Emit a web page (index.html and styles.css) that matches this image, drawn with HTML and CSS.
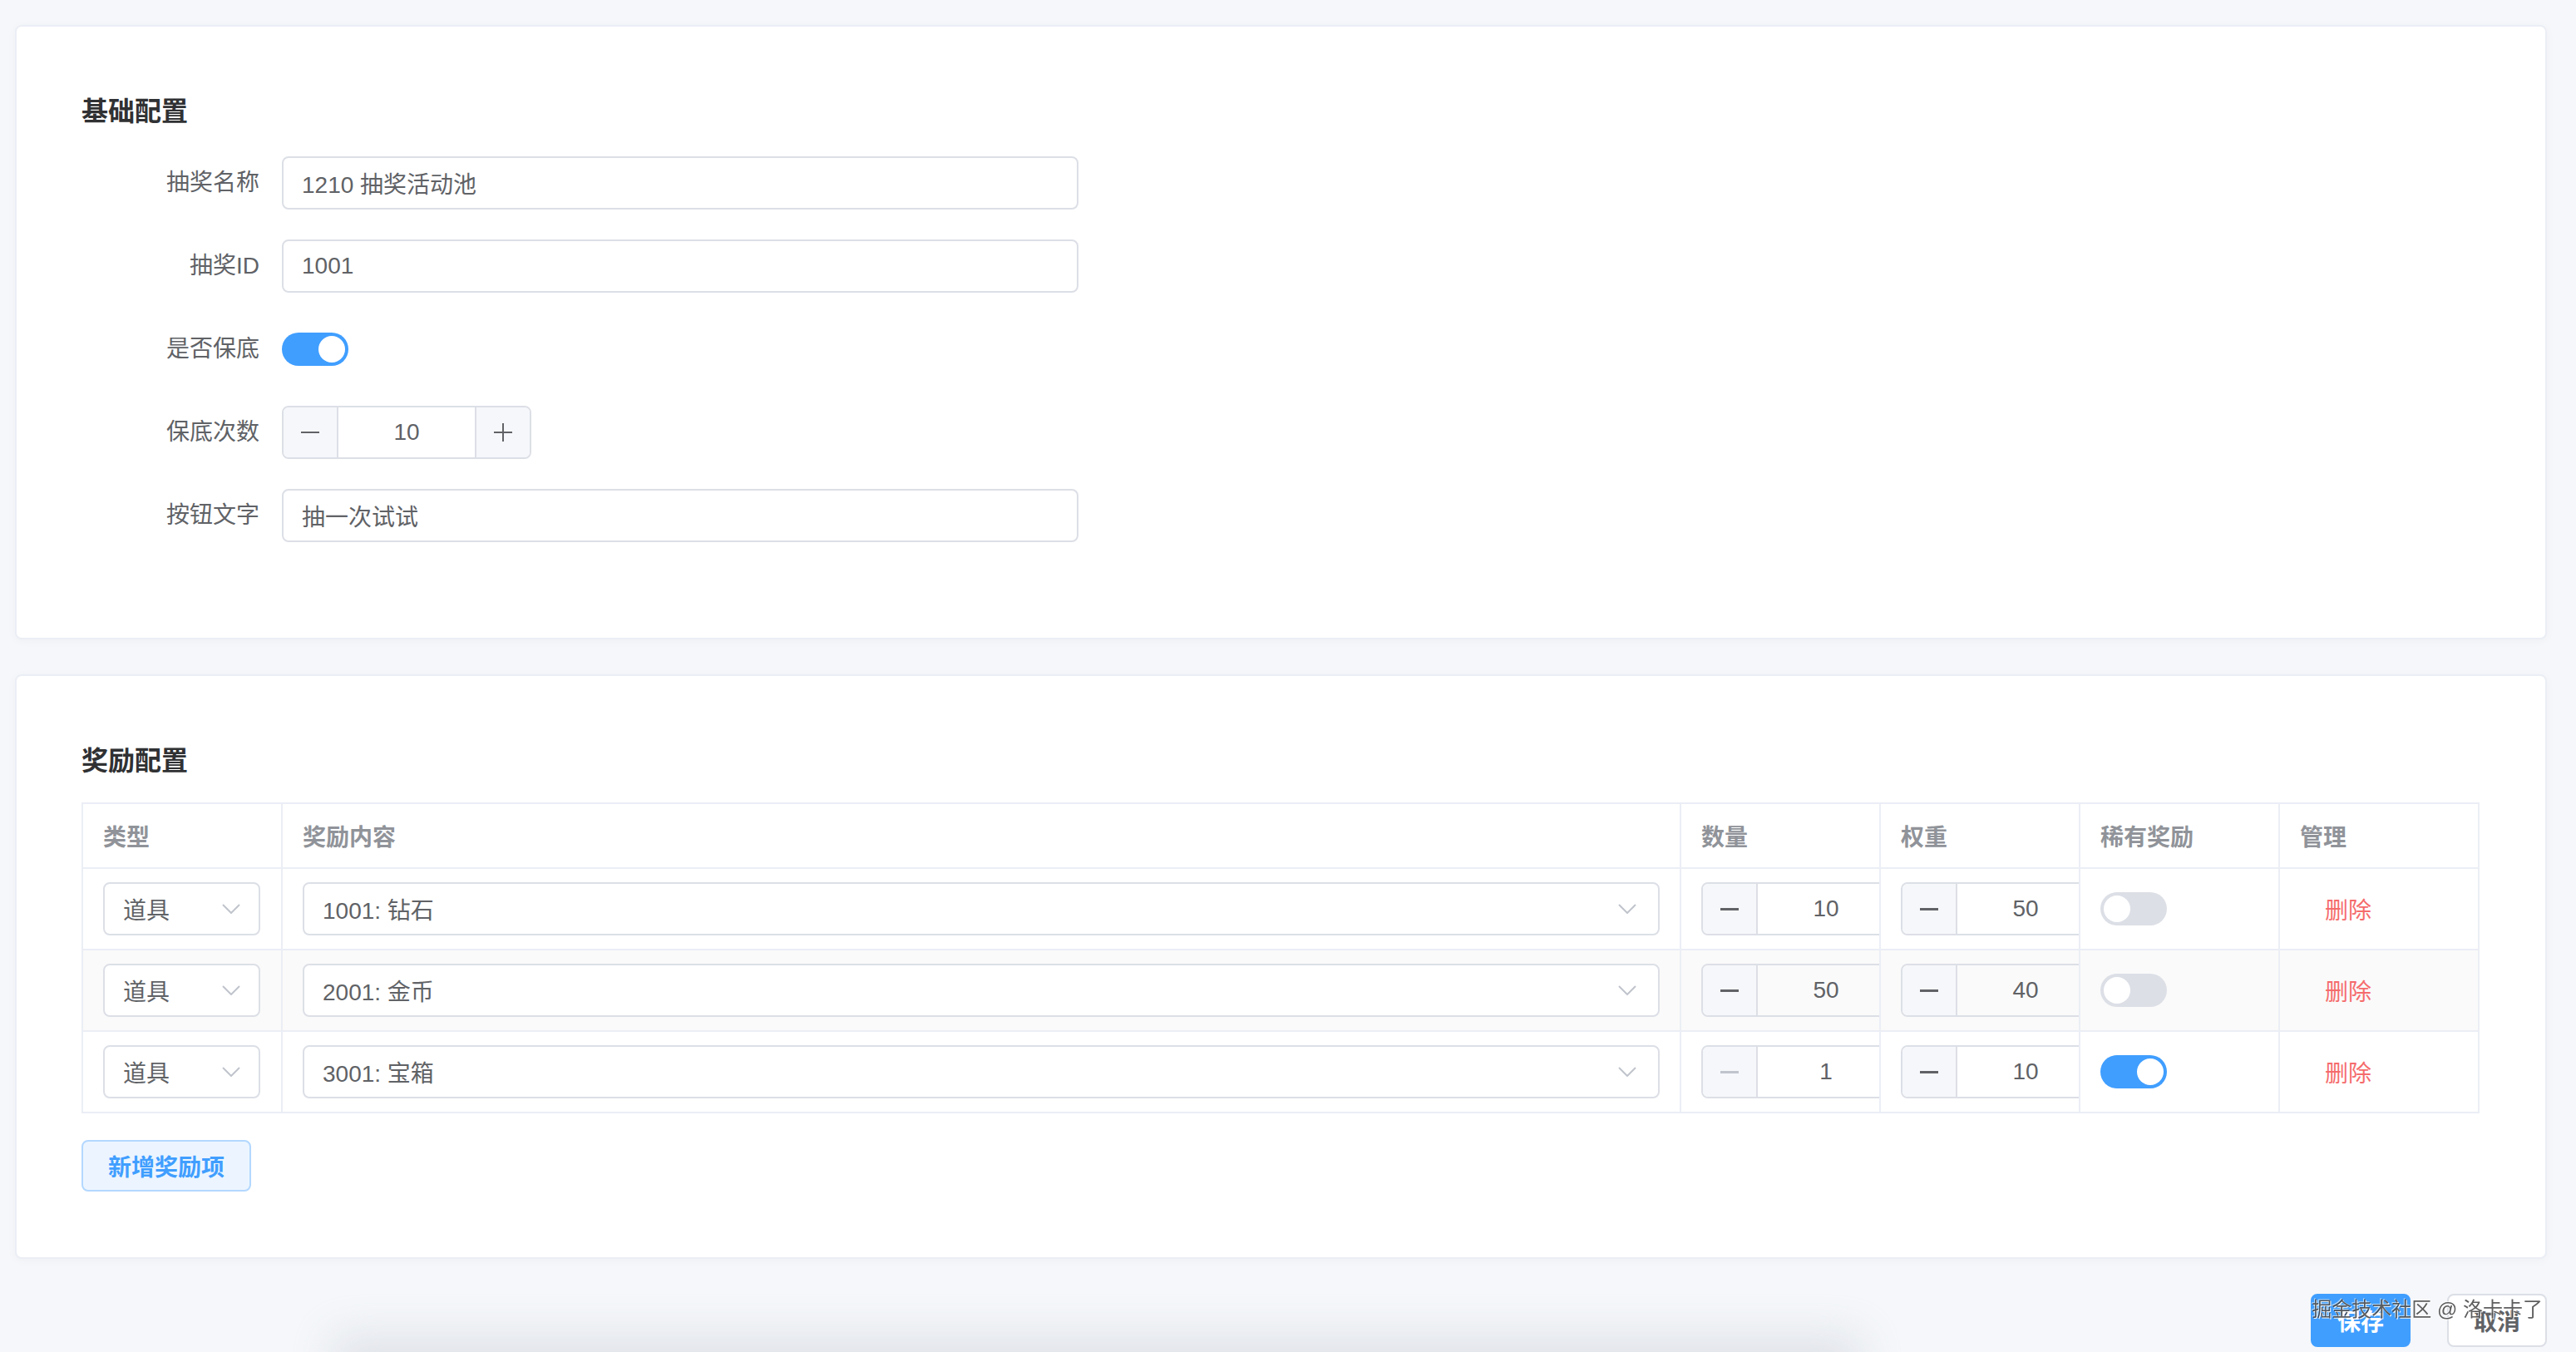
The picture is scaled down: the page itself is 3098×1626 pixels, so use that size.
FILE: index.html
```html
<!DOCTYPE html>
<html lang="zh-CN">
<head>
  <meta charset="UTF-8">
  <meta name="viewport" content="width=device-width, initial-scale=1.0">
  <title>抽奖配置</title>
  <link rel="stylesheet" href="styles.css">
</head>
<body>
  <div class="page">
    <section class="card">
      <h2 class="card-title">基础配置</h2>
      <div class="form-item">
        <label class="form-label">抽奖名称</label>
        <div class="form-control">
          <input class="text-input" type="text" value="1210 抽奖活动池">
        </div>
      </div>
      <div class="form-item">
        <label class="form-label">抽奖ID</label>
        <div class="form-control">
          <input class="text-input" type="text" value="1001">
        </div>
      </div>
      <div class="form-item">
        <label class="form-label">是否保底</label>
        <div class="form-control">
          <span class="switch is-on"><span class="switch-knob"></span></span>
        </div>
      </div>
      <div class="form-item">
        <label class="form-label">保底次数</label>
        <div class="form-control">
          <div class="input-number">
            <span class="num-btn num-minus">
              <svg width="22" height="2" viewBox="0 0 22 2"><rect width="22" height="2" fill="currentColor"/></svg>
            </span>
            <span class="num-value">10</span>
            <span class="num-btn num-plus">
              <svg width="22" height="22" viewBox="0 0 22 22"><rect y="10" width="22" height="2" fill="currentColor"/><rect x="10" width="2" height="22" fill="currentColor"/></svg>
            </span>
          </div>
        </div>
      </div>
      <div class="form-item">
        <label class="form-label">按钮文字</label>
        <div class="form-control">
          <input class="text-input" type="text" value="抽一次试试">
        </div>
      </div>
    </section>

    <section class="card">
      <h2 class="card-title card-title-table">奖励配置</h2>
      <table class="reward-table">
        <colgroup>
          <col class="col-fixed">
          <col>
          <col class="col-fixed">
          <col class="col-fixed">
          <col class="col-fixed">
          <col class="col-fixed">
        </colgroup>
        <thead>
          <tr>
            <th>类型</th>
            <th>奖励内容</th>
            <th>数量</th>
            <th>权重</th>
            <th>稀有奖励</th>
            <th>管理</th>
          </tr>
        </thead>
        <tbody>
          <tr>
            <td><div class="select select-type"><span>道具</span><svg class="arrow" width="22" height="12" viewBox="0 0 22 12"><path d="M1 1l10 10 10-10" fill="none" stroke="#c0c4cc" stroke-width="2"/></svg></div></td>
            <td><div class="select"><span>1001: 钻石</span><svg class="arrow" width="22" height="12" viewBox="0 0 22 12"><path d="M1 1l10 10 10-10" fill="none" stroke="#c0c4cc" stroke-width="2"/></svg></div></td>
            <td><div class="input-number"><span class="num-btn num-minus"><svg width="22" height="3" viewBox="0 0 22 3"><rect width="22" height="3" fill="currentColor"/></svg></span><span class="num-value">10</span></div></td>
            <td><div class="input-number"><span class="num-btn num-minus"><svg width="22" height="3" viewBox="0 0 22 3"><rect width="22" height="3" fill="currentColor"/></svg></span><span class="num-value">50</span></div></td>
            <td><span class="switch"><span class="switch-knob"></span></span></td>
            <td><button class="btn-delete">删除</button></td>
          </tr>
          <tr class="striped">
            <td><div class="select select-type"><span>道具</span><svg class="arrow" width="22" height="12" viewBox="0 0 22 12"><path d="M1 1l10 10 10-10" fill="none" stroke="#c0c4cc" stroke-width="2"/></svg></div></td>
            <td><div class="select"><span>2001: 金币</span><svg class="arrow" width="22" height="12" viewBox="0 0 22 12"><path d="M1 1l10 10 10-10" fill="none" stroke="#c0c4cc" stroke-width="2"/></svg></div></td>
            <td><div class="input-number"><span class="num-btn num-minus"><svg width="22" height="3" viewBox="0 0 22 3"><rect width="22" height="3" fill="currentColor"/></svg></span><span class="num-value">50</span></div></td>
            <td><div class="input-number"><span class="num-btn num-minus"><svg width="22" height="3" viewBox="0 0 22 3"><rect width="22" height="3" fill="currentColor"/></svg></span><span class="num-value">40</span></div></td>
            <td><span class="switch"><span class="switch-knob"></span></span></td>
            <td><button class="btn-delete">删除</button></td>
          </tr>
          <tr>
            <td><div class="select select-type"><span>道具</span><svg class="arrow" width="22" height="12" viewBox="0 0 22 12"><path d="M1 1l10 10 10-10" fill="none" stroke="#c0c4cc" stroke-width="2"/></svg></div></td>
            <td><div class="select"><span>3001: 宝箱</span><svg class="arrow" width="22" height="12" viewBox="0 0 22 12"><path d="M1 1l10 10 10-10" fill="none" stroke="#c0c4cc" stroke-width="2"/></svg></div></td>
            <td><div class="input-number"><span class="num-btn num-minus is-disabled"><svg width="22" height="3" viewBox="0 0 22 3"><rect width="22" height="3" fill="currentColor"/></svg></span><span class="num-value">1</span></div></td>
            <td><div class="input-number"><span class="num-btn num-minus"><svg width="22" height="3" viewBox="0 0 22 3"><rect width="22" height="3" fill="currentColor"/></svg></span><span class="num-value">10</span></div></td>
            <td><span class="switch is-on"><span class="switch-knob"></span></span></td>
            <td><button class="btn-delete">删除</button></td>
          </tr>
        </tbody>
      </table>
      <button class="btn-add">新增奖励项</button>
    </section>

    <div class="footer-actions">
      <button class="btn btn-primary">保存</button>
      <button class="btn btn-default">取消</button>
    </div>
  </div>

  <div class="bottom-shadow"></div>
  <div class="watermark">掘金技术社区 @ 洛卡卡了</div>
</body>
</html>
```

FILE: styles.css
```css
html, body {
  height: 100%;
  overflow: hidden;
}

body {
  margin: 0;
  background: #f5f7fa;
  font-family: "Liberation Sans", "Noto Sans CJK SC", sans-serif;
  color: #606266;
}

.page {
  padding: 30px 35px 0 18px;
}

.card {
  background: #fff;
  border: 2px solid #ebeef5;
  border-radius: 8px;
  box-shadow: 0 2px 12px rgba(0, 0, 0, 0.03);
  padding: 78px 79px 79px 78px;
  margin-bottom: 42px;
}

.card-title {
  margin: 0 0 30px;
  font-size: 32px;
  line-height: 48px;
  font-weight: bold;
  color: #303133;
}

.card-title-table {
  margin-bottom: 26px;
}

.form-item {
  display: flex;
  align-items: center;
  height: 64px;
  margin-bottom: 36px;
}

.form-label {
  width: 241px;
  box-sizing: border-box;
  padding-right: 27px;
  text-align: right;
  font-size: 28px;
  line-height: 64px;
  color: #606266;
}

.form-control {
  display: flex;
  align-items: center;
}

.text-input {
  width: 958px;
  height: 64px;
  box-sizing: border-box;
  border: 2px solid #dcdfe6;
  border-radius: 8px;
  padding: 0 22px;
  font-family: inherit;
  font-size: 28px;
  color: #606266;
  outline: none;
}

/* switch */
.switch {
  display: inline-flex;
  align-items: center;
  width: 80px;
  height: 40px;
  box-sizing: border-box;
  border-radius: 20px;
  background: #dcdfe6;
  padding: 4px;
}

.switch-knob {
  width: 32px;
  height: 32px;
  border-radius: 50%;
  background: #fff;
}

.switch.is-on {
  background: #409eff;
  justify-content: flex-end;
}

/* input number */
.input-number {
  display: flex;
  width: 300px;
  height: 64px;
  box-sizing: border-box;
  border: 2px solid #dcdfe6;
  border-radius: 8px;
  font-size: 28px;
  color: #606266;
}

.num-btn {
  display: flex;
  align-items: center;
  justify-content: center;
  width: 64px;
  background: #f5f7fa;
  color: #606266;
}

.num-btn.is-disabled {
  color: #c0c4cc;
}

.num-minus {
  border-right: 2px solid #dcdfe6;
  border-radius: 6px 0 0 6px;
}

.num-plus {
  border-left: 2px solid #dcdfe6;
  border-radius: 0 6px 6px 0;
}

.num-value {
  flex: 1;
  display: flex;
  align-items: center;
  justify-content: center;
}

.reward-table .input-number .num-value {
  padding-right: 66px;
}

/* table */
.reward-table {
  width: 100%;
  border-collapse: collapse;
  table-layout: fixed;
  border: 2px solid #ebeef5;
}

.col-fixed {
  width: 240px;
}

.reward-table th,
.reward-table td {
  border: 2px solid #ebeef5;
  padding: 0 24px;
  text-align: left;
  overflow: hidden;
  white-space: nowrap;
}

.reward-table th {
  height: 76px;
  font-size: 28px;
  font-weight: bold;
  color: #909399;
}

.reward-table td {
  height: 96px;
}

.reward-table tr.striped td {
  background: #fafafa;
}

.select {
  display: flex;
  align-items: center;
  justify-content: space-between;
  height: 64px;
  box-sizing: border-box;
  border: 2px solid #dcdfe6;
  border-radius: 8px;
  background: #fff;
  padding: 0 26px 0 22px;
  font-size: 28px;
  color: #606266;
}

.select-type {
  width: 189px;
  padding-right: 22px;
}

.btn-delete {
  border: none;
  background: none;
  padding: 0 30px;
  font-family: inherit;
  font-size: 28px;
  color: #f56c6c;
  cursor: pointer;
}

.btn-add {
  margin-top: 32px;
  height: 62px;
  padding: 0 30px;
  border: 2px solid #b3d8ff;
  border-radius: 8px;
  background: #ecf5ff;
  color: #409eff;
  font-family: inherit;
  font-size: 28px;
  font-weight: bold;
  cursor: pointer;
}

/* footer */
.footer-actions {
  display: flex;
  justify-content: flex-end;
  gap: 44px;
}

.btn {
  width: 120px;
  height: 64px;
  border-radius: 8px;
  font-family: inherit;
  font-size: 28px;
  font-weight: bold;
  cursor: pointer;
}

.btn-primary {
  border: 2px solid #409eff;
  background: #409eff;
  color: #fff;
}

.btn-default {
  border: 2px solid #dcdfe6;
  background: #fff;
  color: #606266;
}

.bottom-shadow {
  position: fixed;
  left: 420px;
  right: 880px;
  bottom: -40px;
  height: 40px;
  background: #e6e8ec;
  box-shadow: 0 0 50px 20px rgba(200, 204, 212, 0.45);
}

.watermark {
  position: fixed;
  right: 40px;
  bottom: 36px;
  font-size: 24px;
  line-height: 30px;
  color: rgba(40, 40, 40, 0.75);
  text-shadow: 1px 1px 0 rgba(255, 255, 255, 0.9), -1px -1px 0 rgba(255, 255, 255, 0.6);
  pointer-events: none;
}
```
